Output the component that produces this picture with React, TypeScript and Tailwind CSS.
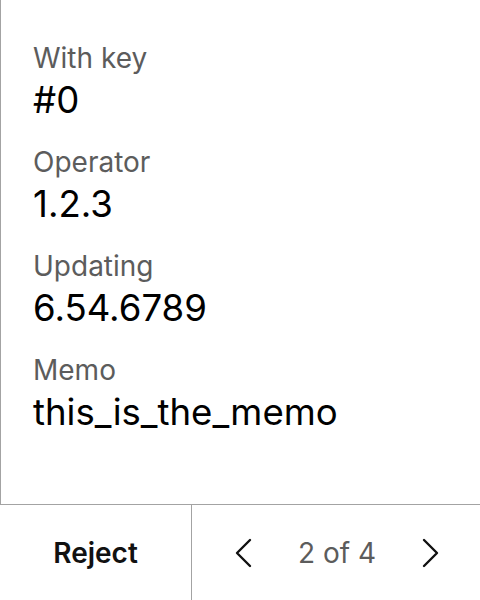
import React from "react";

const rows = [
  { label: "With key", value: "#0" },
  { label: "Operator", value: "1.2.3" },
  { label: "Updating", value: "6.54.6789" },
  { label: "Memo", value: "this_is_the_memo" },
];

function Chevron({ dir }: { dir: "left" | "right" }) {
  return (
    <svg width="22" height="30" viewBox="0 0 22 30" fill="none" stroke="#111" strokeWidth="2.4" strokeLinecap="round" strokeLinejoin="round">
      {dir === "left" ? <polyline points="18,2 5,15 18,28" /> : <polyline points="4,2 17,15 4,28" />}
    </svg>
  );
}

export default function App() {
  return (
    <div className="w-[480px] h-[600px] flex flex-col bg-white text-black" style={{ fontFamily: "Inter, 'Noto Sans', sans-serif" }}>
      <div className="flex-1 border-l border-[#a3a3a3] pl-8 pt-[40px] flex flex-col gap-[22px]">
        {rows.map((r) => (
          <div key={r.label} className="flex flex-col">
            <span className="text-[28px] leading-[36px] text-[#5c5c5c]">{r.label}</span>
            <span className="mt-[2px] text-[36.6px] leading-[44px] text-black">{r.value}</span>
          </div>
        ))}
      </div>
      <div className="h-[96px] flex border-t border-[#a3a3a3]">
        <button className="w-[192px] border-r border-[#a3a3a3] flex items-center justify-center text-[28px] font-semibold text-[#111]">
          Reject
        </button>
        <div className="flex-1 flex items-center justify-between pl-[40px] pr-[38px]">
          <button className="flex items-center justify-center">
            <Chevron dir="left" />
          </button>
          <span className="text-[28px] text-[#5c5c5c]">2 of 4</span>
          <button className="flex items-center justify-center">
            <Chevron dir="right" />
          </button>
        </div>
      </div>
    </div>
  );
}
